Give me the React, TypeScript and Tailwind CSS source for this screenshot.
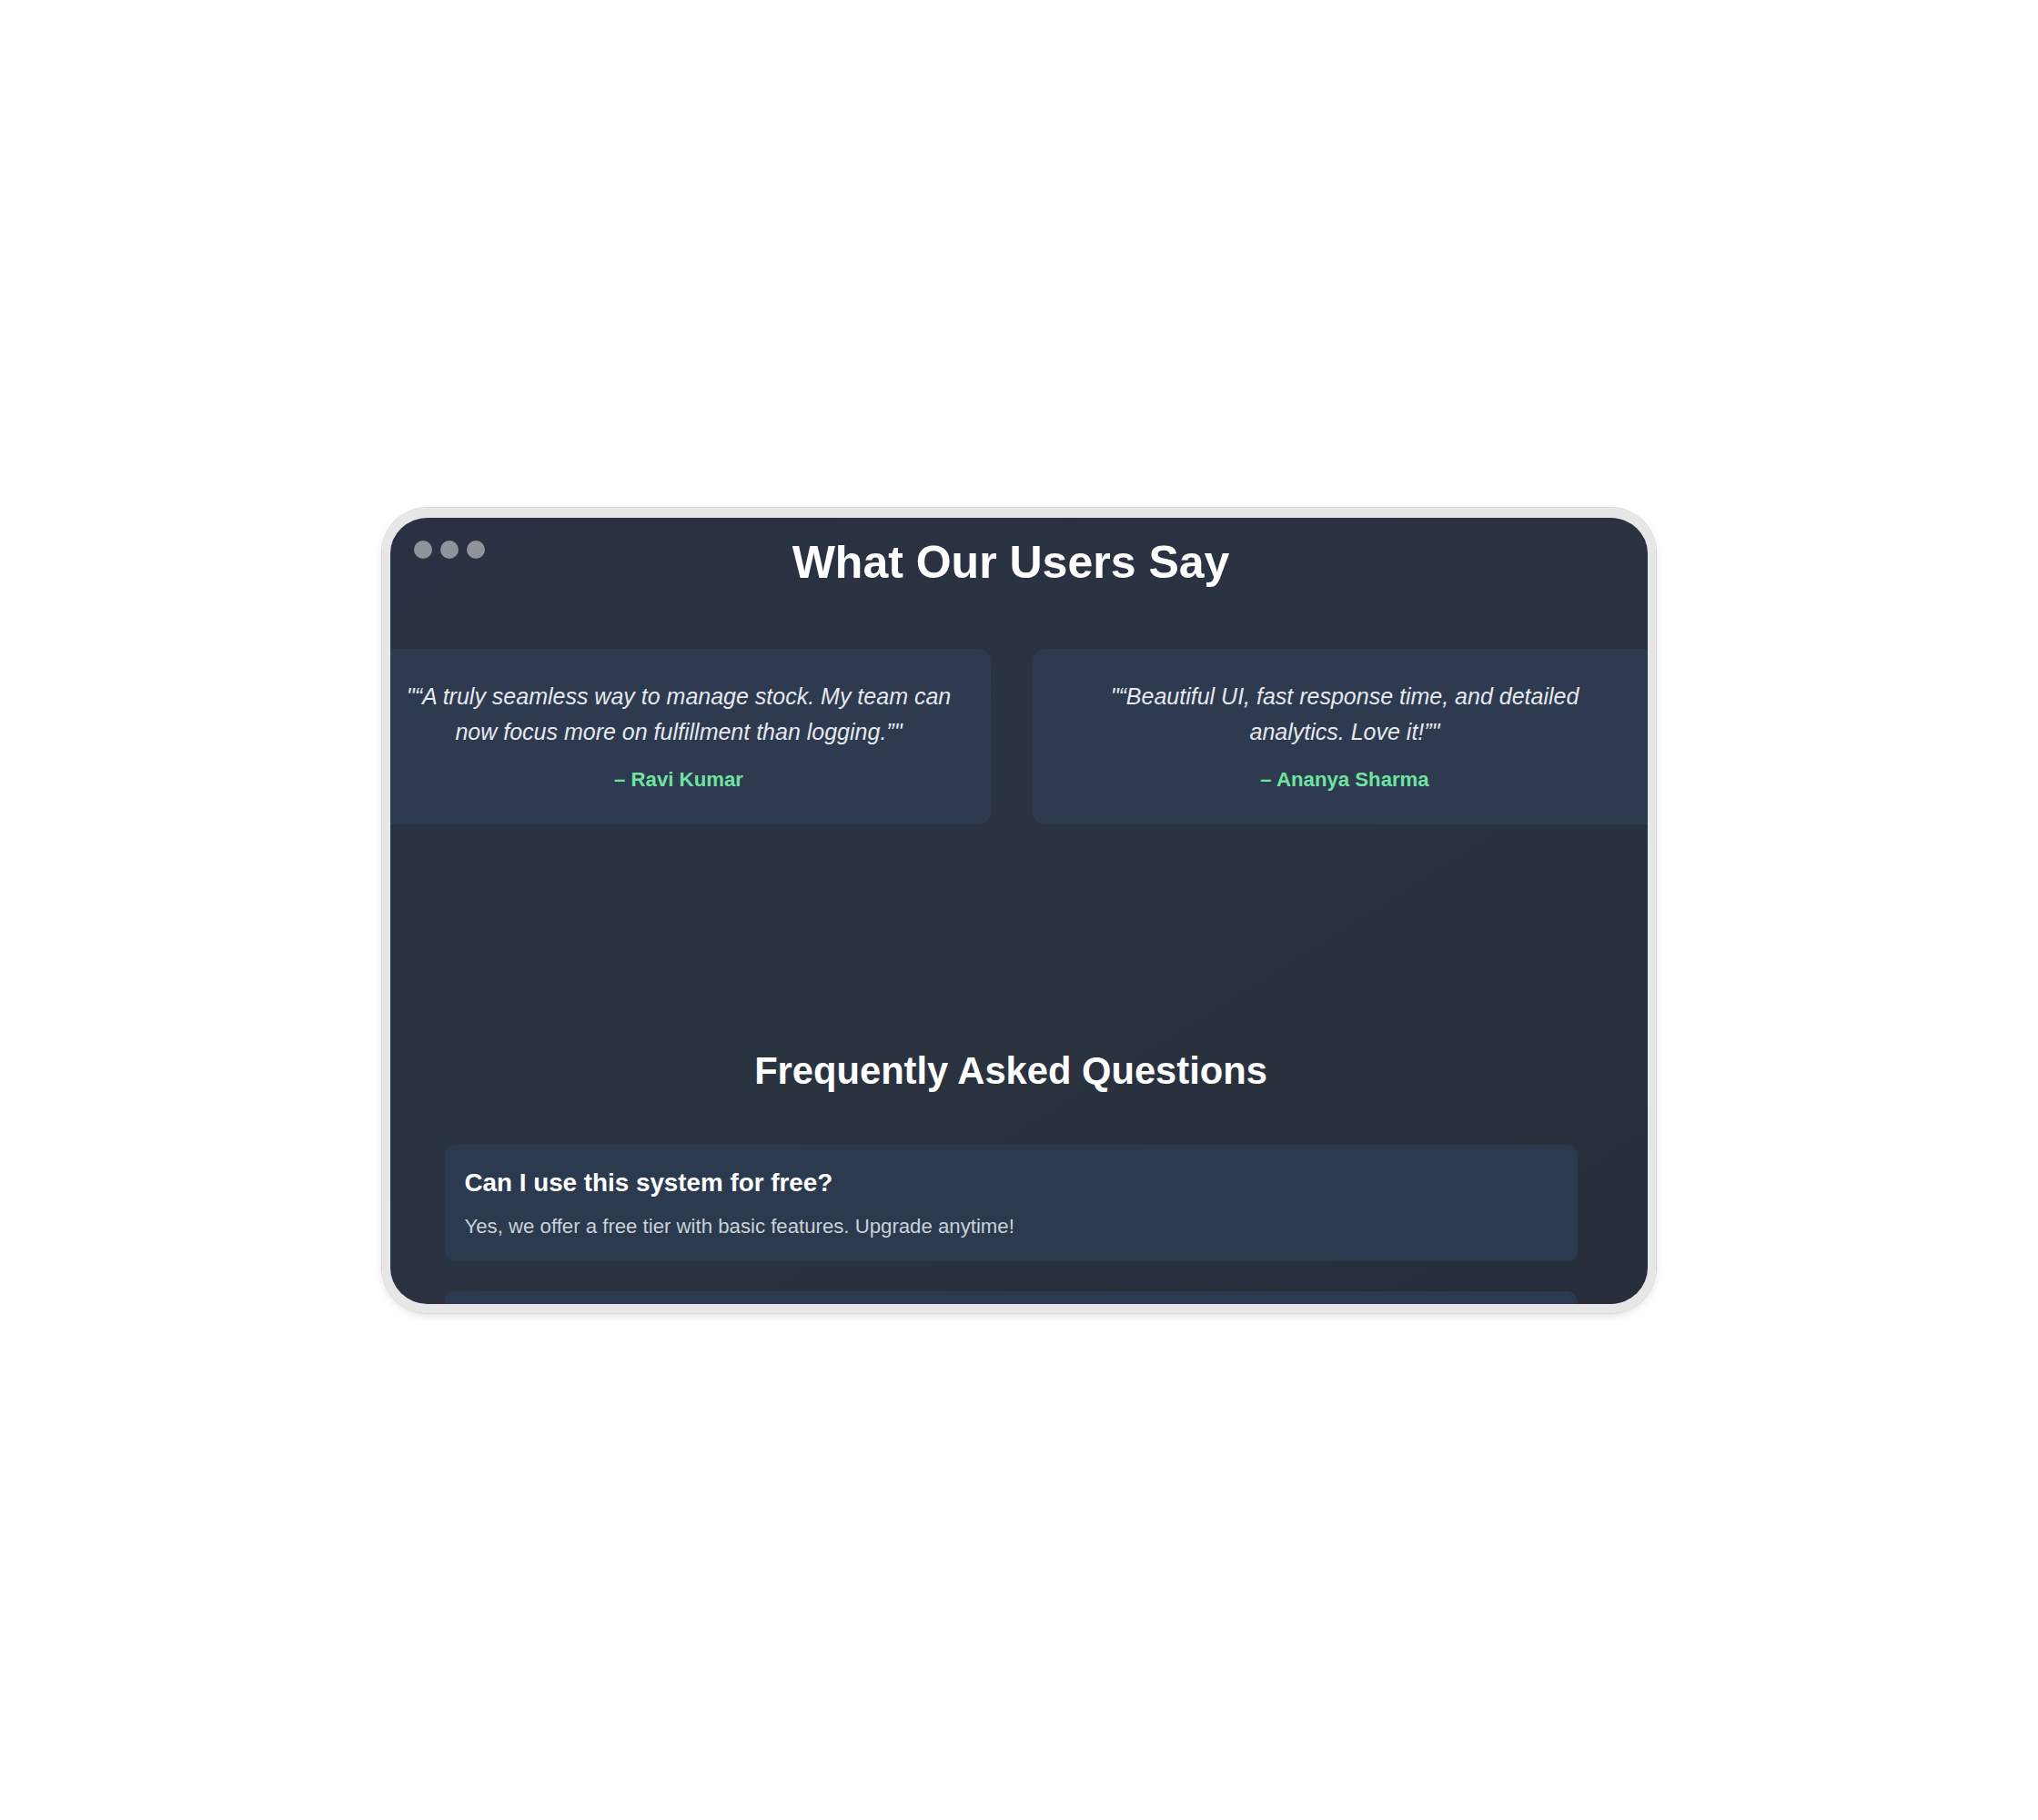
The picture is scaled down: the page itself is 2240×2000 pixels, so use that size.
import React from "react";

const testimonials = [
  {
    quote: "“A truly seamless way to manage stock. My team can now focus more on fulfillment than logging.”",
    name: "Ravi Kumar",
  },
  {
    quote: "“Beautiful UI, fast response time, and detailed analytics. Love it!”",
    name: "Ananya Sharma",
  },
];

const faqs = [
  {
    q: "Can I use this system for free?",
    a: "Yes, we offer a free tier with basic features. Upgrade anytime!",
  },
  {
    q: "Is my data secure?",
    a: "Absolutely. All data is encrypted and backed up daily.",
  },
  {
    q: "Can I export reports?",
    a: "Yes, reports can be exported as CSV or PDF at any time.",
  },
];

export default function App() {
  return (
    <div
      className="w-[2240px] h-[2000px] bg-white flex items-center justify-center"
      style={{ fontFamily: '"Liberation Sans", Arial, sans-serif' }}
    >
      <div className="relative w-[1400px] h-[885px] rounded-[50px] border-[9px] border-t-[11px] border-b-[10px] border-[#e7e7e7] shadow-[0_0_0_1px_#dadada,0_3px_8px_rgba(0,0,0,0.12)] overflow-hidden bg-gradient-to-br from-[#2a3142] via-[#2b3341] to-[#272e3a]">
        <div className="absolute top-[25px] left-[26px] flex gap-[9px] z-10">
          <span className="w-[20px] h-[20px] rounded-full bg-[#8f949c]" />
          <span className="w-[20px] h-[20px] rounded-full bg-[#8f949c]" />
          <span className="w-[20px] h-[20px] rounded-full bg-[#8f949c]" />
        </div>

        <div className="w-[1364px] pt-[22px]">
          <h2 className="text-center text-white font-bold text-[50px] leading-[55.6px]">
            What Our Users Say
          </h2>

          <div className="mt-[67px] -ml-[26px] flex gap-[46px] w-max">
            {testimonials.map((t) => (
              <div
                key={t.name}
                className="w-[686px] rounded-[14px] bg-[#2d3a50] px-[36px] py-[33px] text-center"
              >
                <p className="italic text-[25px] leading-[38.9px] text-[#e6e8ec]">
                  "{t.quote}"
                </p>
                <p className="mt-[16px] font-bold text-[22.2px] leading-[33.3px] text-[#6fe3a0]">
                  – {t.name}
                </p>
              </div>
            ))}
          </div>

          <h2 className="mt-[246px] text-center text-white font-bold text-[41.7px] leading-[50px]">
            Frequently Asked Questions
          </h2>

          <div className="mt-[56px] w-[1245px] mx-auto flex flex-col gap-[33px]">
            {faqs.map((f) => (
              <div key={f.q} className="rounded-[11px] bg-[#2b3a4e] px-[22px] py-[22.5px]">
                <h3 className="text-white font-bold text-[27.8px] leading-[38.9px]">{f.q}</h3>
                <p className="mt-[11px] text-[22.2px] leading-[33.3px] text-[#c9d0d9]">{f.a}</p>
              </div>
            ))}
          </div>
        </div>
      </div>
    </div>
  );
}
